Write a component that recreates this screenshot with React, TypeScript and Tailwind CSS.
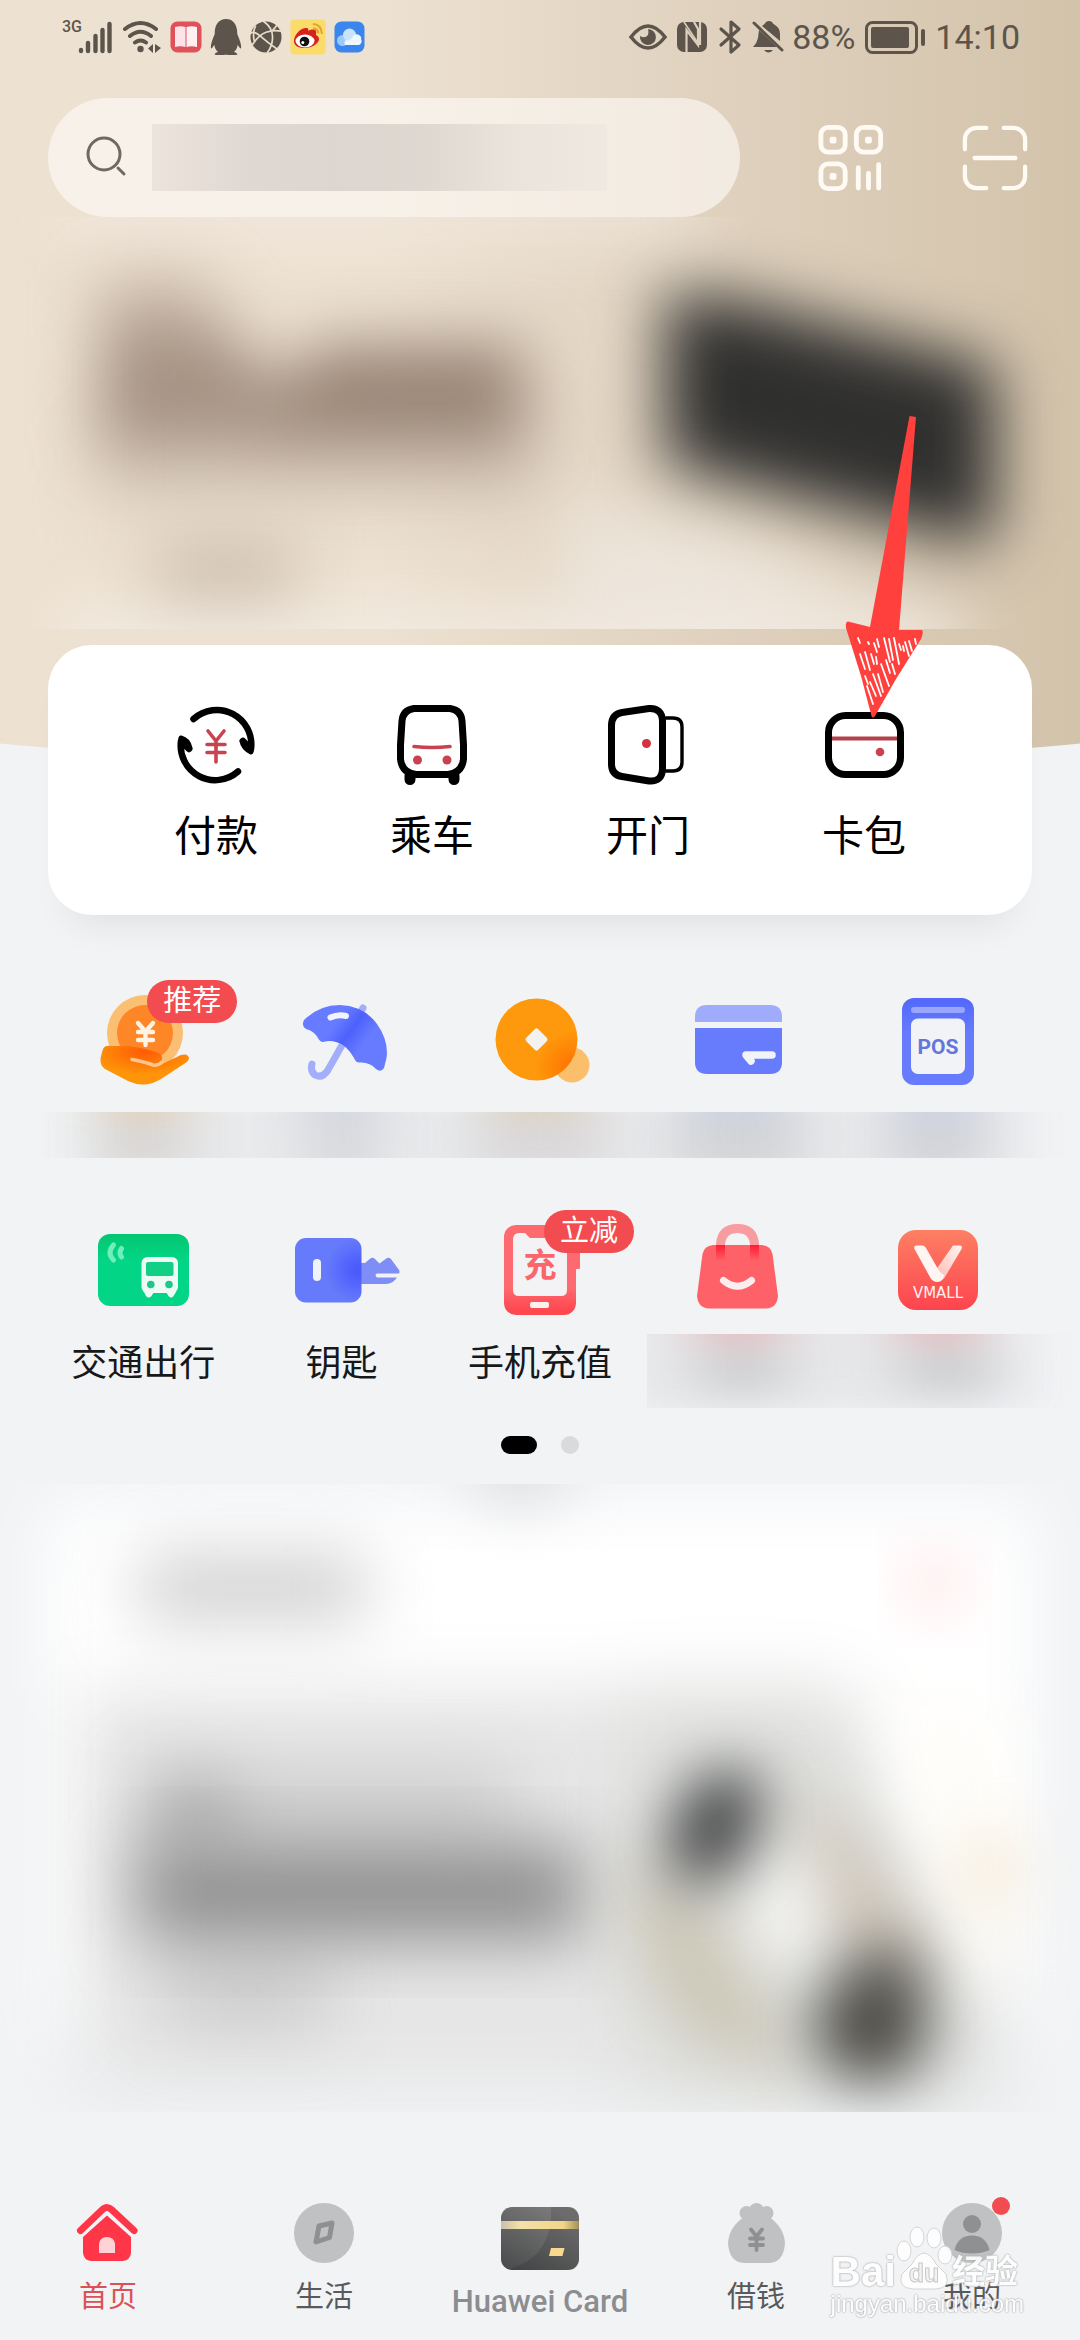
import type { ReactNode } from "react";
import { FaQq } from "react-icons/fa";

/* ---------- Status bar ---------- */

function SignalIcons() {
  return (
    <div className="flex items-center gap-2">
      <div className="flex items-start">
        <span className="text-base leading-4 font-medium">3G</span>
        <svg className="-ml-1 w-9 h-9" viewBox="0 0 36 36" stroke="currentColor" strokeWidth="4.4" strokeLinecap="round">
          <path d="M3 31v1M10 24v8M17.500 17v15M24.500 11v21M31.500 5v27" />
        </svg>
      </div>
      <svg className="w-10 h-9" viewBox="0 0 40 36" fill="none" stroke="currentColor" strokeWidth="4" strokeLinecap="round">
        <path d="M3 10Q18.500 -2 34 10M8 17Q18.500 8.500 29 17M13 23.500Q18.500 19.500 24 23.500" />
        <circle cx="18.500" cy="30" r="3.200" fill="currentColor" stroke="none" />
        <path d="M31 25v9l-5-4.500zM33 25v9l6-5z" fill="currentColor" stroke="none" />
      </svg>
      <svg className="w-8 h-8" viewBox="0 0 32 32">
        <rect x="0.500" y="0.500" width="31" height="31" rx="7" fill="#e0515a" />
        <path d="M5 6q6-1.500 10.500 0v20q-5-1.500-10.500 0z" fill="#fde3ea" />
        <path d="M27 6q-6-1.500-10.500 0v20q5-1.500 10.500 0z" fill="#fff0f3" />
      </svg>
      <FaQq className="w-8 h-9" />
      <svg className="w-8 h-9" viewBox="1 0 34 36">
        <circle cx="18" cy="18" r="16.500" fill="currentColor" />
        <g stroke="#e9ddcc" strokeWidth="1.800" fill="none">
          <path d="M15 1Q25 8 25 18T19 35M35 12Q26 10 18 13T3 27M1 15Q4 10 12 17T30 31M7 6Q3 14 6 24M30 5Q27 9 25 11" />
        </g>
      </svg>
      <svg className="w-9 h-9" viewBox="0 0 36 36">
        <rect x="0.500" y="0.500" width="35" height="35" rx="4" fill="#fbdc6a" />
        <path d="M4 21C5 14 12 8 17 9c1 0 2 2 1 3 3-2 7-2 8 0 .500 1 0 3 0 4 4 2 4 6 0 9-6 6-23 6-22-4z" fill="#d8201f" />
        <ellipse cx="15" cy="22" rx="9.500" ry="6.500" fill="#fff" />
        <circle cx="14.500" cy="22.500" r="4.800" fill="#111" />
        <circle cx="12.800" cy="23.500" r="1.500" fill="#fff" />
        <path d="M23 5q8 0 9 10M23 9.500q5 0 5.500 5" fill="none" stroke="#e3a32c" strokeWidth="2" />
      </svg>
      <svg className="w-8 h-8" viewBox="0 0 32 32">
        <rect x="0.500" y="0.500" width="30" height="31" rx="7" fill="#3a86ec" />
        <circle cx="8.500" cy="19.500" r="5.500" fill="#9cc9fa" />
        <circle cx="15.500" cy="14" r="6.500" fill="#c9e3fd" />
        <path d="M11 24a4 4 0 0 1 1-5q5 1 7-4 3-3 6-1 3 2 2 4a4 4 0 0 1-2 6z" fill="#eef7ff" />
      </svg>
    </div>
  );
}

function SystemIcons() {
  return (
    <div className="flex items-center gap-2">
      <svg className="w-10 h-8" viewBox="0 0 40 32" fill="none">
        <path d="M3 16Q20-6 37 16Q20 38 3 16z" stroke="currentColor" strokeWidth="3.600" />
        <path d="M20 8a8 8 0 1 1-8 7q5 3 8-1 1-3 0-6z" fill="currentColor" />
      </svg>
      <svg className="w-8 h-8" viewBox="0 0 32 32" fill="none">
        <rect x="1" y="1" width="30" height="30" rx="7" fill="currentColor" />
        <path d="M10.500 31V9L22 24V8L18 1M24 1V24" stroke="#dccebb" strokeWidth="2.200" />
        <path d="M8 1L22 22" stroke="#dccebb" strokeWidth="1.500" />
      </svg>
      <svg className="w-7 h-9" viewBox="0 0 28 36" fill="none" stroke="currentColor" strokeWidth="3.200" strokeLinejoin="round" strokeLinecap="round">
        <path d="M5 10l18 16-8 7V3l8 7L5 26" />
      </svg>
      <svg className="w-8 h-9" viewBox="2 0 32 36" fill="currentColor">
        <path d="M12 7q3-2 4-4 3-2 6 0 1 2 3 3 5 3 5 9v7z" />
        <path d="M9 11L27 28H3q4-4 5-9zM14 31h9q-4.500 5-9 0z" />
        <path d="M4 4l28 27" stroke="currentColor" strokeWidth="3" strokeLinecap="round" />
      </svg>
      <span className="text-[34px] leading-none">88%</span>
      <svg className="w-16 h-9" viewBox="0 0 64 36">
        <rect x="3.500" y="3.500" width="50" height="30" rx="6" fill="none" stroke="currentColor" strokeWidth="3" />
        <rect x="8" y="8" width="38" height="21" rx="2" fill="currentColor" />
        <rect x="58" y="10" width="4" height="17" rx="2" fill="currentColor" />
      </svg>
      <span className="text-[34px] leading-none">14:10</span>
    </div>
  );
}

/* ---------- Header ---------- */

function SearchRow() {
  return (
    <div className="flex items-center mt-6 pl-12 pr-[52px]">
      <label className="flex flex-1 items-center h-[119px] rounded-full bg-[#fffbf8]/60 pl-9">
        <svg className="w-12 h-12 mr-5 text-[#6f6962]" viewBox="0 0 48 48" fill="none" stroke="currentColor" strokeWidth="3" strokeLinecap="round">
          <circle cx="20" cy="20" r="16" />
          <path d="M34 34l6 6" />
        </svg>
        <input
          type="search"
          aria-label="搜索"
          className="w-[455px] h-[67px] outline-none bg-[linear-gradient(to_right,#ece4dc,#e0d8d2_20%,#ddd6d0_40%,#dfd8d1_60%,#ebe4dc_80%,#f0e9e2)]"
        />
      </label>
      <button aria-label="付款码" className="ml-[77px] text-[#fffaf3]">
        <svg className="w-[68px] h-[68px]" viewBox="0 0 70 70" fill="none" stroke="currentColor" strokeWidth="5">
          <rect x="4" y="3.500" width="25" height="25.500" rx="7.500" />
          <rect x="40.500" y="3.500" width="25" height="25.500" rx="7.500" />
          <rect x="4" y="41" width="25" height="25.500" rx="7.500" />
          <g fill="currentColor" stroke="none">
            <rect x="13" y="13" width="7" height="7" rx="2" />
            <rect x="49.500" y="13" width="7" height="7" rx="2" />
            <rect x="13" y="50.500" width="7" height="7" rx="2" />
          </g>
          <path d="M42.500 45v21M53 51v15M63.500 42v24" strokeLinecap="round" />
        </svg>
      </button>
      <button aria-label="扫一扫" className="ml-[77px] text-[#fffaf3]">
        <svg className="w-[66px] h-[66px]" viewBox="0 0 68 68" fill="none" stroke="currentColor" strokeWidth="4.400" strokeLinecap="round">
          <path d="M3 25V15A12 12 0 0 1 15 3h10M43 3h10a12 12 0 0 1 12 12v10M3 43v10a12 12 0 0 0 12 12h10M43 65h10a12 12 0 0 0 12-12V43M13 34h42" />
        </svg>
      </button>
    </div>
  );
}

function HeroBanner() {
  return (
    <svg className="block w-full h-[412px]" viewBox="0 -7 1080 412" preserveAspectRatio="none">
      <defs>
        <filter id="heroBlur" x="-40%" y="-40%" width="180%" height="180%" colorInterpolationFilters="sRGB">
          <feGaussianBlur stdDeviation="32" />
        </filter>
      </defs>
      <g filter="url(#heroBlur)">
        <path d="M60 -50H700V20H60z" fill="#f2e9e0" fillOpacity="0.7" />
        <path d="M60 385H960V460H60z" fill="#f4ede6" fillOpacity="0.9" />
        <path d="M560 270L720 300L900 370L560 400z" fill="#ece4da" />
        <path d="M95 190H540V280H95z" fill="#c9bbab" fillOpacity="0.6" />
      </g>
      <g filter="url(#heroBlur)">
        <path d="M100 55H205L230 120H100z" fill="#a89484" fillOpacity="0.6" />
        <path d="M100 110H235L275 155V222H100z" fill="#937f70" fillOpacity="0.8" />
        <path d="M315 120H525V222H270V180z" fill="#8f7b6c" fillOpacity="0.9" />
        <path d="M155 320H295V370H155z" fill="#c3b5a5" fillOpacity="0.9" />
      </g>
      <path d="M665 68L740 76L995 142V315L970 318L665 240z" fill="#2f2f2e" filter="url(#heroBlur)" />
    </svg>
  );
}

/* ---------- Quick actions ---------- */

function PointerArrow() {
  return (
    <svg className="absolute left-[85px] -top-[291px] w-[88px] h-[308px] pointer-events-none" viewBox="0 0 88 308">
      <path d="M68.500 2L75 3L58 216L81 216Q83 218 80 225L55 265L34 302Q31 306 30 300L20 262L5 214Q4 206 9 208L29 213z" fill="#ff403c" />
      <g stroke="#fff" strokeWidth="1.800" strokeLinecap="round">
        <path d="M17 224l2 5M19 240l5 15M24 238l5 18M30 240l3 10M27 228l1 2M33 229l3 9M36 225l2 8M35 243l1 7M43 224l6 24M48 225l4 21M53 224l5 26M58 230l2 6M62 232l1 5M64 228l4 14M68 227l3 10M74 225l1 5M45 246l4 13M40 250l8 22M37 260l5 18M32 260l8 22M24 262l3 8M26 272l6 18M29 268l6 14M51 250l3 10" />
      </g>
    </svg>
  );
}

const quickActions: { label: string; icon: ReactNode; marked?: boolean }[] = [
  {
    label: "付款",
    icon: (
      <>
        <path d="M17.500 14A34.500 34.500 0 0 1 75 44L67 36M62 66.500A34.500 34.500 0 0 1 5 36L13 44" strokeWidth="6.500" />
        <path d="M5 33q7 2 9 10M75 47q-8-4-9-11" strokeWidth="5" />
        <g stroke="#c8434f" strokeWidth="3.600">
          <path d="M32 26l8 10 8-10M40 36v21M31 39.500h18M31 47.500h18" />
        </g>
      </>
    ),
  },
  {
    label: "乘车",
    icon: (
      <>
        <path d="M22 3.500H58Q69 5 70 16L71.500 40V54Q70 68 56 69.500H24Q10 68 8.500 54V40L10 16Q11 5 22 3.500z" strokeWidth="7" />
        <path d="M18 71v3.500M62 71v3.500" strokeWidth="11" />
        <path d="M22 41.500q18 2 36 0" stroke="#c8434f" strokeWidth="3.600" />
        <g fill="#c8434f" stroke="none">
          <circle cx="25.500" cy="55" r="4.500" />
          <circle cx="55" cy="55" r="4.500" />
        </g>
      </>
    ),
  },
  {
    label: "开门",
    icon: (
      <>
        <path d="M14 7.500L41 3.500Q54 3 54.500 16V64Q54 77 41 76L14 71.500Q4 70 3.500 60V20Q4 9 14 7.500z" strokeWidth="7" />
        <path d="M58 13h7q9 0 9 9v35q0 9-9 9h-7" strokeWidth="3.400" />
        <circle cx="38.500" cy="38.500" r="4.500" fill="#d2313f" stroke="none" />
      </>
    ),
  },
  {
    label: "卡包",
    marked: true,
    icon: (
      <>
        <rect x="4.500" y="10.500" width="72" height="59" rx="17" strokeWidth="7" />
        <path d="M8 33.500H73" stroke="#b4424c" strokeWidth="3.800" strokeLinecap="butt" />
        <circle cx="56" cy="47" r="4.300" fill="#c8434f" stroke="none" />
      </>
    ),
  },
];

function QuickActions() {
  return (
    <section className="relative z-10 -mt-[123px] mx-12 px-15 pt-15 pb-13 grid grid-cols-4 bg-white rounded-[44px] shadow-[0_28px_36px_-20px_rgba(0,0,0,0.08)]">
      {quickActions.map((action) => (
        <button key={action.label} className="relative flex flex-col items-center">
          <svg className="w-20 h-20" viewBox="0 0 80 80" fill="none" stroke="#000" strokeLinecap="round" strokeLinejoin="round">
            {action.icon}
          </svg>
          <span className="mt-[26px] text-[42px] leading-13 text-black">{action.label}</span>
          {action.marked && <PointerArrow />}
        </button>
      ))}
    </section>
  );
}

/* ---------- Services ---------- */

function Badge({ children }: { children: ReactNode }) {
  return (
    <span className="absolute top-0 left-16 px-4 whitespace-nowrap rounded-full bg-[#f24c50] text-white text-[29px] leading-[43px]">
      {children}
    </span>
  );
}

function ServiceIcon({ name, badge, children }: { name?: string; badge?: string; children: ReactNode }) {
  return (
    <span className="relative block w-[120px] h-[120px]">
      <svg className="w-full h-full" viewBox="0 0 120 120" fill="none" role="img" aria-label={name}>
        {children}
      </svg>
      {badge && <Badge>{badge}</Badge>}
    </span>
  );
}

function HandCoinIcon() {
  return (
    <>
      <defs>
        <radialGradient id="palm" cx="0.500" cy="0.150" r="0.600">
          <stop offset="0" stopColor="#ff5a05" />
          <stop offset="1" stopColor="#fe9509" />
        </radialGradient>
      </defs>
      <circle cx="62" cy="53" r="38" fill="#fbbf74" />
      <circle cx="62" cy="53" r="28" fill="#ff8626" />
      <path d="M55 43l7.500 8.500 7.500-8.500M62.500 52v13M55 52h15M55 60h15" stroke="#fff3e6" strokeWidth="4.400" strokeLinecap="round" />
      <path d="M20 69Q22 65 28 66H45Q62 68 76 73Q81 77 78 82L75 86L98 75Q105 73 106 78Q106 81 101 84L78 99Q62 109 45 101L22 89Q17 86 17.500 78z" fill="url(#palm)" />
      <path d="M49 79.500Q62 82 70 85Q75 86 79 82" stroke="#fcc689" strokeWidth="3.500" strokeLinecap="round" />
    </>
  );
}

function UmbrellaIcon() {
  return (
    <>
      <defs>
        <linearGradient id="canopy" x1="0.200" y1="0.300" x2="0.900" y2="0.700">
          <stop offset="0.200" stopColor="#667bff" />
          <stop offset="0.450" stopColor="#4e60fd" />
          <stop offset="0.750" stopColor="#667bff" />
        </linearGradient>
      </defs>
      <path d="M81 28L46 90Q40 99 33 95Q28 91 30 84" stroke="#a3aefa" strokeWidth="7" strokeLinecap="round" />
      <path d="M22 40Q37 25 58 25Q82 26 95 44Q107 61 104.500 78L102 88Q99 93 94 89Q88 82 78 82.500Q74 83 72 78Q64 64 54 62Q48 60 41 62Q38 62 36 58Q32 51 24 49Q19 46 22 40z" fill="url(#canopy)" />
      <path d="M48.500 37.500Q56 34 64 36" stroke="#f1f3ff" strokeWidth="6" strokeLinecap="round" />
    </>
  );
}

function CoinsIcon() {
  return (
    <>
      <defs>
        <radialGradient id="coin" cx="0.950" cy="0.850" r="0.450">
          <stop offset="0" stopColor="#ff7000" />
          <stop offset="1" stopColor="#fe980c" />
        </radialGradient>
      </defs>
      <circle cx="92" cy="85" r="17.500" fill="#fbbf6c" />
      <circle cx="56.500" cy="59.500" r="41" fill="url(#coin)" />
      <rect x="48" y="51" width="17" height="17" rx="2.500" transform="rotate(45 56.500 59.500)" fill="#f4f2f0" />
    </>
  );
}

function BankCardIcon() {
  return (
    <>
      <path d="M17 42V37Q17 25 29 25H92Q104 25 104 37V42z" fill="#9fabfb" />
      <path d="M17 48H104V82Q104 94 92 94H29Q17 94 17 82z" fill="#677bfd" />
      <path d="M94 75H68L73 81" stroke="#f1f3f9" strokeWidth="7.500" strokeLinecap="round" strokeLinejoin="round" />
    </>
  );
}

function PosIcon() {
  return (
    <>
      <defs>
        <linearGradient id="pos" x1="0" y1="0" x2="0" y2="1">
          <stop offset="0" stopColor="#5368fb" />
          <stop offset="0.400" stopColor="#677bfd" />
        </linearGradient>
      </defs>
      <rect x="25" y="18" width="72" height="87" rx="12" fill="url(#pos)" />
      <rect x="34" y="27" width="54" height="6" rx="3" fill="#9aa5fd" />
      <rect x="34" y="38.500" width="54" height="55.500" rx="7" fill="#f1f3f6" />
      <text x="61" y="73.500" textAnchor="middle" fontSize="21" fontWeight="700" fill="#6476dc">POS</text>
    </>
  );
}

function TransitIcon() {
  return (
    <>
      <defs>
        <linearGradient id="transit" x1="0" y1="0" x2="0" y2="1">
          <stop offset="0" stopColor="#04c672" />
          <stop offset="0.350" stopColor="#02d585" />
        </linearGradient>
      </defs>
      <rect x="15" y="24" width="91" height="72" rx="12" fill="url(#transit)" />
      <path d="M30.500 35Q23.500 43 30.500 50M38.500 38.500Q35.500 43 38.500 47" stroke="#6eeebb" strokeWidth="5" strokeLinecap="round" />
      <rect x="58.500" y="47" width="36.500" height="36" rx="6" fill="#eefaf5" />
      <path d="M61 82h10l-2.500 4q-3 3-5.500 0zM93 82H83l2.500 4q3 3 5 0z" fill="#eefaf5" />
      <rect x="63" y="52" width="27.500" height="14" rx="2" fill="#12cf86" />
      <circle cx="67.800" cy="74.500" r="3.800" fill="#1fc888" />
      <circle cx="86" cy="74.500" r="3.800" fill="#1fc888" />
    </>
  );
}

function KeyIcon() {
  return (
    <>
      <defs>
        <radialGradient id="keyHead" cx="0.950" cy="0.500" r="0.500">
          <stop offset="0.150" stopColor="#4b5cfd" />
          <stop offset="1" stopColor="#667bfb" />
        </radialGradient>
      </defs>
      <path d="M79 53h4l6-5q2-1 4 1l4.500 4.500L105 48q2-1 4 1l8 11q1 1.500 0 3.500H95q-3 1.500 0 4h20q-4 6-11 6.500H79z" fill="#7f8df7" />
      <rect x="13" y="28" width="66.500" height="64.500" rx="11" fill="url(#keyHead)" />
      <rect x="31" y="49" width="8" height="22" rx="4" fill="#f1f3f9" />
    </>
  );
}

function TopUpIcon() {
  return (
    <>
      <defs>
        <linearGradient id="phone" x1="0" y1="0" x2="0" y2="1">
          <stop offset="0.700" stopColor="#fd6a70" />
          <stop offset="0.950" stopColor="#ff474f" />
        </linearGradient>
      </defs>
      <rect x="90" y="32" width="10" height="27" rx="1" fill="#fd6a70" />
      <rect x="24" y="15" width="72" height="90" rx="12" fill="url(#phone)" />
      <path d="M39 23H45L50 28H70L75 23H80Q87 23 87 30V80Q87 86 81 86H39Q33 86 33 80V30Q33 23 39 23z" fill="#f3f3f5" />
      <rect x="50" y="92" width="19" height="6" rx="2" fill="#fff0f0" />
      <text x="60" y="67" textAnchor="middle" fontSize="33" fontWeight="700" fill="#f9666c">充</text>
    </>
  );
}

function ShoppingBagIcon() {
  return (
    <>
      <defs>
        <linearGradient id="strap" x1="0" y1="0" x2="0" y2="1">
          <stop offset="0" stopColor="#ff1c33" />
          <stop offset="1" stopColor="#ff6168" />
        </linearGradient>
      </defs>
      <path d="M42.500 48V34Q44 18.500 59.500 18.500Q75 18.500 76.500 34V48" stroke="#f89ca0" strokeWidth="9" />
      <path d="M35 35H84Q93 36 94.500 44L100 86Q99 98 88 98.500H31Q20 98 19 86L24.500 44Q26 36 35 35z" fill="#ff6168" />
      <rect x="38" y="35" width="9" height="16" fill="url(#strap)" />
      <rect x="72" y="35" width="9" height="16" fill="url(#strap)" />
      <path d="M45.500 70.500Q59.500 82 73.500 70.500" stroke="#fbeeee" strokeWidth="7" strokeLinecap="round" />
    </>
  );
}

function VmallIcon() {
  return (
    <>
      <defs>
        <linearGradient id="vmall" x1="0" y1="0" x2="0" y2="1">
          <stop offset="0" stopColor="#fd8063" />
          <stop offset="1" stopColor="#fd444f" />
        </linearGradient>
        <linearGradient id="vmallFold" x1="1" y1="0" x2="0" y2="1">
          <stop offset="0" stopColor="#fff5f3" />
          <stop offset="1" stopColor="#fdb5ab" />
        </linearGradient>
      </defs>
      <rect x="21" y="20" width="80" height="80" rx="18" fill="url(#vmall)" />
      <path d="M76 35.500H83Q86 36 84.500 39L68 67Q63 74 58 68L56 64z" fill="url(#vmallFold)" />
      <path d="M39 35.500H46Q48 36 49 38L61 59Q64 64 67 65Q66 72 60.500 72Q56 72 53.500 68L37.500 39Q36.500 36 39 35.500z" fill="#fff5f3" />
      <text x="61" y="88" textAnchor="middle" fontSize="15" fontFamily="DejaVu Sans, sans-serif" fill="#fff0ee">VMALL</text>
    </>
  );
}

const captionTints = [
  { x: 143, w: 90, top: "#e2cfb8", body: "#d8d6d4" },
  { x: 342, w: 70, top: "#d3d6e0", body: "#d5d7db" },
  { x: 540, w: 130, top: "#ddd0ba", body: "#dad8d9" },
  { x: 738, w: 130, top: "#ccd1e4", body: "#d2d4d7" },
  { x: 937, w: 100, top: "#ccd1e4", body: "#d2d3d8" },
];

function CaptionStrip() {
  return (
    <svg className="block mt-3 w-full h-[46px]" viewBox="0 0 1080 46" preserveAspectRatio="none">
      <defs>
        <filter id="captionBlur" x="-60%" y="-100%" width="220%" height="300%" colorInterpolationFilters="sRGB">
          <feGaussianBlur stdDeviation="28 14" />
        </filter>
      </defs>
      <rect x="90" y="-20" width="930" height="90" fill="#e9eaec" filter="url(#captionBlur)" />
      {captionTints.map((tint) => (
        <g key={tint.x} filter="url(#captionBlur)">
          <rect x={tint.x - tint.w / 2} y="-10" width={tint.w} height="70" fill={tint.body} />
          <rect x={tint.x - 40} y="-30" width="80" height="36" fill={tint.top} />
        </g>
      ))}
    </svg>
  );
}

function CaptionBlock() {
  return (
    <svg className="block col-span-2 ml-2 -mr-11 w-[433px] h-[74px]" viewBox="0 0 433 76" preserveAspectRatio="none">
      <defs>
        <filter id="blockBlur" x="-60%" y="-100%" width="220%" height="300%" colorInterpolationFilters="sRGB">
          <feGaussianBlur stdDeviation="32 18" />
        </filter>
      </defs>
      <rect x="-30" y="-40" width="400" height="120" fill="#e7e8ea" filter="url(#blockBlur)" />
      <g filter="url(#blockBlur)">
        <rect x="55" y="16" width="80" height="44" fill="#c9cacc" />
        <rect x="258" y="16" width="85" height="44" fill="#c9cacc" />
        <rect x="55" y="-26" width="75" height="32" fill="#e2a9ad" />
        <rect x="255" y="-26" width="75" height="32" fill="#e2a9ad" />
      </g>
    </svg>
  );
}

function Services() {
  return (
    <section className="pt-[65px]">
      <div className="grid grid-cols-5 px-11 justify-items-center">
        <button><ServiceIcon badge="推荐"><HandCoinIcon /></ServiceIcon></button>
        <button><ServiceIcon name="保险"><UmbrellaIcon /></ServiceIcon></button>
        <button><ServiceIcon name="理财"><CoinsIcon /></ServiceIcon></button>
        <button><ServiceIcon name="银行卡"><BankCardIcon /></ServiceIcon></button>
        <button><ServiceIcon><PosIcon /></ServiceIcon></button>
      </div>
      <CaptionStrip />

      <div className="grid grid-cols-5 mt-13 px-11 justify-items-center items-start text-4xl text-[#17181a]">
        <button className="row-span-2 flex flex-col items-center">
          <ServiceIcon><TransitIcon /></ServiceIcon>
          <span className="mt-3.5">交通出行</span>
        </button>
        <button className="row-span-2 flex flex-col items-center">
          <ServiceIcon><KeyIcon /></ServiceIcon>
          <span className="mt-3.5">钥匙</span>
        </button>
        <button className="row-span-2 flex flex-col items-center">
          <ServiceIcon badge="立减"><TopUpIcon /></ServiceIcon>
          <span className="mt-3.5">手机充值</span>
        </button>
        <button className="mb-1"><ServiceIcon name="购物"><ShoppingBagIcon /></ServiceIcon></button>
        <button className="mb-1"><ServiceIcon><VmallIcon /></ServiceIcon></button>
        <CaptionBlock />
      </div>

      <div className="flex justify-center gap-6 mt-7">
        <span className="w-9 h-[18px] rounded-full bg-black" />
        <span className="w-[18px] h-[18px] rounded-full bg-[#d9dadc]" />
      </div>
    </section>
  );
}

/* ---------- Promo panel ---------- */

function PromoPanel() {
  return (
    <svg className="block mt-[30px] w-full h-[628px]" viewBox="0 0 1080 628" preserveAspectRatio="none">
      <defs>
        <filter id="promoBlur" x="-60%" y="-60%" width="220%" height="220%" colorInterpolationFilters="sRGB">
          <feGaussianBlur stdDeviation="34" />
        </filter>
        <filter id="promoSoft" x="-60%" y="-60%" width="220%" height="220%" colorInterpolationFilters="sRGB">
          <feGaussianBlur stdDeviation="30" />
        </filter>
      </defs>
      <g filter="url(#promoBlur)">
        <rect x="45" y="18" width="990" height="530" fill="#fff" />
        <rect x="80" y="205" width="770" height="400" fill="#e6e6e6" />
        <path d="M620 200H840L1000 480V620H620z" fill="#e0e1df" />
      </g>
      <g filter="url(#promoBlur)">
        <rect x="140" y="74" width="225" height="60" fill="#cbcbcb" />
        <ellipse cx="520" cy="-14" rx="42" ry="24" fill="#c9cacd" />
        <rect x="150" y="290" width="360" height="70" fill="#cbcbcb" />
        <rect x="155" y="290" width="70" height="80" fill="#a6a6a6" />
        <rect x="165" y="465" width="165" height="80" fill="#cccccc" />
      </g>
      <rect x="138" y="360" width="445" height="96" fill="#8f8f8f" filter="url(#promoBlur)" />
      <ellipse cx="935" cy="98" rx="26" ry="30" fill="#ffe0e2" filter="url(#promoSoft)" />
      <g filter="url(#promoSoft)">
        <path d="M625 370L700 400L780 540L800 600L690 560L640 480z" fill="#ccc8b8" />
        <path d="M790 290L880 380L940 500L860 500L820 400z" fill="#ccc4b6" />
        <ellipse cx="785" cy="425" rx="40" ry="58" fill="#f4f4f2" />
        <path d="M890 210L1010 230V520L960 480L900 320z" fill="#fefdfa" />
        <ellipse cx="990" cy="385" rx="34" ry="46" fill="#f6eddc" />
      </g>
      <g filter="url(#promoSoft)">
        <ellipse cx="715" cy="342" rx="40" ry="62" transform="rotate(28 715 342)" fill="#3e3f40" />
        <path d="M880 455L915 480L932 555L895 600L830 590L808 530z" fill="#4a4944" />
      </g>
    </svg>
  );
}

/* ---------- Bottom navigation ---------- */

function Watermark() {
  return (
    <div
      aria-hidden="true"
      className="absolute right-[56px] bottom-[22px] flex flex-col text-white pointer-events-none opacity-90 [text-shadow:0_0_2px_#aaa,0_0_2px_#aaa]"
    >
      <div className="flex items-end font-bold leading-9 whitespace-nowrap">
        <span className="text-[42px] font-[Liberation_Sans]">Bai</span>
        <svg className="w-[56px] h-[64px]" viewBox="0 0 56 64" fill="#fff" stroke="#d0d0d0" strokeWidth="1">
          <ellipse cx="8" cy="25" rx="7" ry="10" />
          <ellipse cx="21" cy="11" rx="7" ry="10" />
          <ellipse cx="38" cy="12" rx="7" ry="10" />
          <ellipse cx="49" cy="29" rx="7" ry="9" />
          <path d="M28 27Q35 28 40 38L50 48Q55 62 40 63H17Q1 62 6 48L16 38Q21 28 28 27z" />
          <text x="28" y="56" textAnchor="middle" fontSize="25" fontFamily="Liberation Sans, sans-serif" fill="#f2f2f2" stroke="#c4c4c4" className="[text-shadow:none]">du</text>
        </svg>
        <span className="text-[33px]">经验</span>
      </div>
      <span className="text-2xl leading-7 font-[Liberation_Sans]">jingyan.baidu.com</span>
    </div>
  );
}

type NavItemProps = { label: string; active?: boolean; unread?: boolean; children: ReactNode };

function NavItem({ label, active, unread, children }: NavItemProps) {
  return (
    <a href="#" className={`flex flex-col items-center gap-3.5 text-[29px] leading-9 ${active ? "text-[#dc5158]" : "text-[#58595b]"}`}>
      <span className="relative">
        <svg className="w-16 h-16" viewBox="0 0 64 64" fill="none">
          {children}
        </svg>
        {unread && <span className="absolute -top-1 -right-1.5 size-[18px] rounded-full bg-[#f24c50]" />}
      </span>
      <span>{label}</span>
    </a>
  );
}

function BottomNav() {
  return (
    <nav className="relative grid grid-cols-5 items-start pt-[89px] pb-5">
      <NavItem label="首页" active>
        <path d="M7 36L31 14.500L55 36V52Q54 59.500 47 60H15Q8 59.500 7 52z" fill="#ff3647" />
        <path d="M4.500 29.500L26 10Q31 6 36 10L58 29.500" stroke="#f1f3f5" strokeWidth="12" strokeLinecap="round" />
        <path d="M4.500 29.500L26 9Q31 4 36 9L58 29.500" stroke="#ff3647" strokeWidth="7" strokeLinecap="round" />
        <path d="M23 52V43Q24 36 31 36Q38 36 39 43V52z" fill="#ffd3d6" />
      </NavItem>
      <NavItem label="生活">
        <circle cx="32" cy="32" r="30" fill="#c0c1c3" />
        <path d="M27 25L40 22L37.500 36.500L24 41z" stroke="#8f9092" strokeWidth="5" strokeLinejoin="round" />
      </NavItem>
      <a href="#" className="flex flex-col items-center gap-3.5 pt-1.5 text-[31px] leading-9 font-medium text-[#8c8d90]">
        <svg className="w-[78px] h-[63px]" viewBox="0 0 78 63">
          <defs>
            <linearGradient id="navCard" x1="0" y1="1" x2="0.700" y2="0">
              <stop offset="0" stopColor="#48494a" />
              <stop offset="1" stopColor="#7c7c7c" />
            </linearGradient>
            <linearGradient id="navGold" x1="0" y1="0" x2="1" y2="0">
              <stop offset="0" stopColor="#c9c1ab" />
              <stop offset="0.250" stopColor="#f3e1a8" />
              <stop offset="0.800" stopColor="#f2d687" />
              <stop offset="1" stopColor="#a18f5c" />
            </linearGradient>
          </defs>
          <rect width="78" height="63" rx="11" fill="url(#navCard)" />
          <path d="M8 62Q52 50 50 0H67Q78 0 78 11V52Q78 63 67 63H11z" fill="#000" fillOpacity="0.120" />
          <rect y="14" width="78" height="8" fill="url(#navGold)" />
          <path d="M50 41H63.500L61.500 49H48z" fill="#f6d98d" />
        </svg>
        <span className="whitespace-nowrap">Huawei Card</span>
      </a>
      <NavItem label="借钱">
        <circle cx="22.500" cy="12" r="7" fill="#c0c1c3" />
        <circle cx="32.500" cy="9.500" r="7.500" fill="#c0c1c3" />
        <circle cx="42.500" cy="12" r="7" fill="#c0c1c3" />
        <path d="M20 16H45Q60 26 61 42Q60 61 45 62H20Q5 61 4 42Q5 26 20 16z" fill="#c0c1c3" />
        <path d="M27 28.500l5.500 7 5.500-7M32.500 36v13M26 37.500h13M26 44h13" stroke="#8f9092" strokeWidth="3.800" strokeLinecap="round" />
      </NavItem>
      <NavItem label="我的" unread>
        <circle cx="32" cy="32" r="30" fill="#c0c1c3" />
        <circle cx="32" cy="23" r="9" fill="#8f9092" />
        <path d="M14.500 49Q18 34.500 32 34.500Q46 34.500 49.500 49Q42 52.500 32 52.500Q22 52.500 14.500 49z" fill="#8f9092" />
      </NavItem>
      <Watermark />
    </nav>
  );
}

export default function App() {
  return (
    <main className="flex flex-col min-h-screen overflow-x-hidden bg-[#f1f3f5] font-[Roboto,'Noto_Sans_CJK_SC',sans-serif]">
      <header className="pb-[139px] bg-linear-to-r from-[#ede1d1] from-35% via-[#e0d2bf] via-65% to-[#d3c3ab] [clip-path:ellipse(200%_100%_at_50%_0)]">
        <div className="flex items-center justify-between h-[74px] pl-[62px] pr-[60px] text-[#5d554b]">
          <SignalIcons />
          <SystemIcons />
        </div>
        <SearchRow />
        <HeroBanner />
      </header>
      <QuickActions />
      <Services />
      <PromoPanel />
      <BottomNav />
    </main>
  );
}
